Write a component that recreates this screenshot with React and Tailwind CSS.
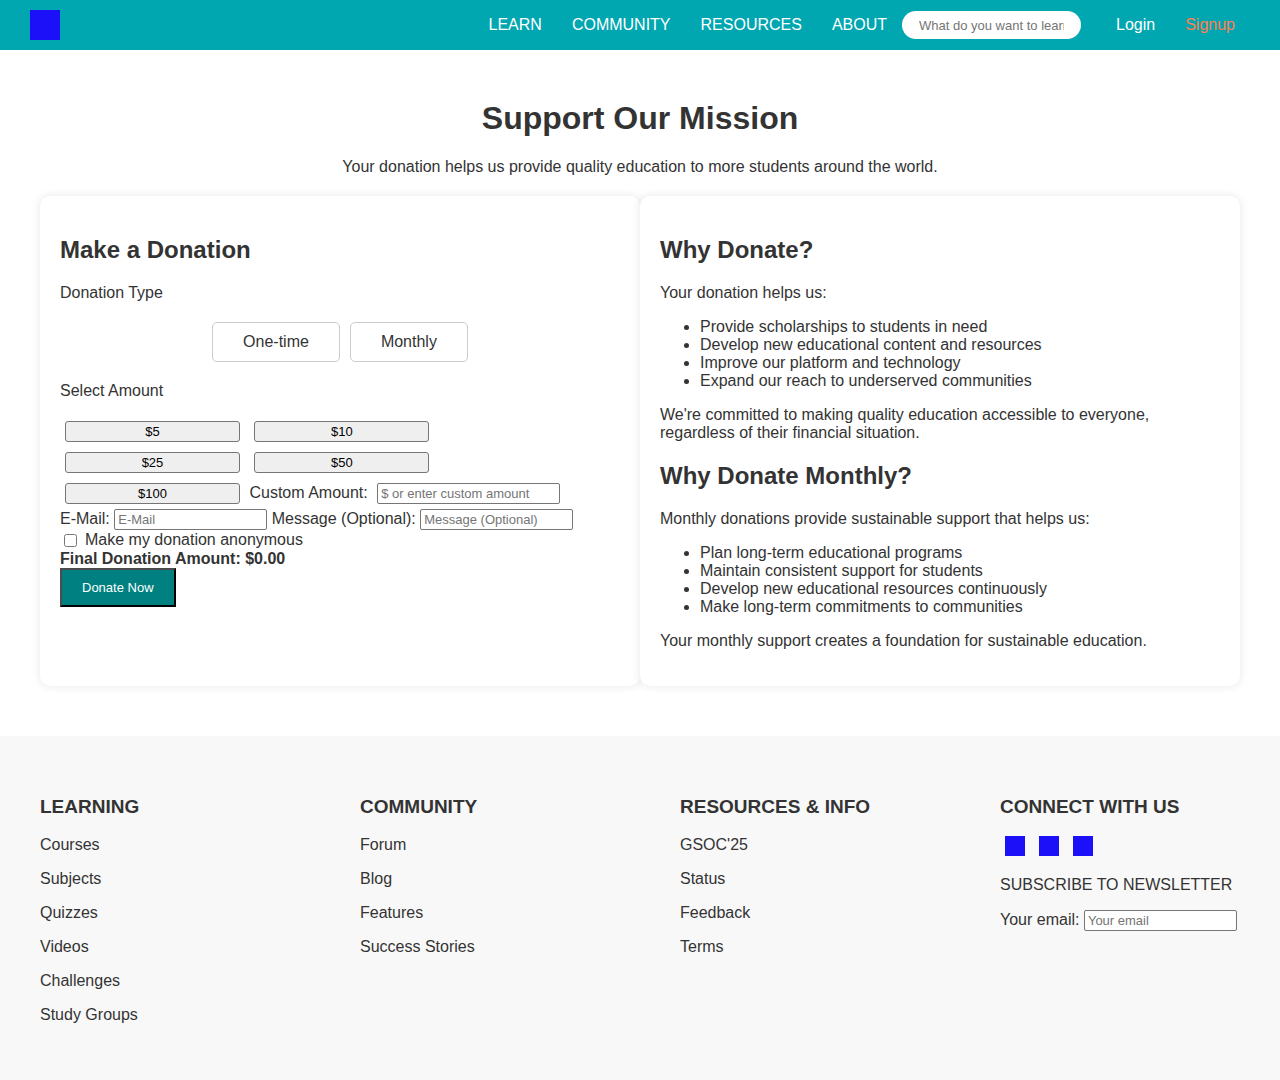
const navLinks = ["LEARN", "COMMUNITY", "RESOURCES", "ABOUT"];
const amounts = ["$5", "$10", "$25", "$50", "$100"];

const footerColumns = [
  {
    title: "LEARNING",
    links: ["Courses", "Subjects", "Quizzes", "Videos", "Challenges", "Study Groups"],
  },
  { title: "COMMUNITY", links: ["Forum", "Blog", "Features", "Success Stories"] },
  { title: "RESOURCES & INFO", links: ["GSOC'25", "Status", "Feedback", "Terms"] },
];

const fieldClass =
  "h-[21px] rounded-[2px] border border-[#767676] bg-white px-[3px] text-[13px] text-black placeholder:text-[#757575]";

function Header() {
  return (
    <header className="flex h-[50px] items-center justify-between bg-[#00a6b0] px-[30px] text-white">
      <a href="#home" aria-label="Home" className="block size-[30px] bg-[#1b10f8]" />
      <nav className="flex items-center">
        {navLinks.map((label) => (
          <a key={label} href={"#" + label.toLowerCase()} className="px-[15px]">
            {label}
          </a>
        ))}
        <input
          type="text"
          aria-label="Search"
          placeholder="What do you want to learn?"
          className="mr-5 h-7 w-[179px] rounded-full bg-white px-[17px] text-[13px] text-black placeholder:text-[#757575]"
        />
        <a href="#login" className="px-[15px]">Login</a>
        <a href="#signup" className="px-[15px] text-[#ff7f50]">Signup</a>
      </nav>
    </header>
  );
}

function DonationForm() {
  return (
    <form className="rounded-[10px] bg-white p-5 shadow-[0_0_10px_rgba(0,0,0,0.1)]">
      <h2 className="my-5 text-[24px] leading-7 font-bold">Make a Donation</h2>
      <p>Donation Type</p>
      <div className="my-5 flex justify-center gap-2.5">
        <button type="button" className="h-10 rounded-[5px] border border-[#ccc] px-[30px]">
          One-time
        </button>
        <button type="button" className="h-10 rounded-[5px] border border-[#ccc] px-[30px]">
          Monthly
        </button>
      </div>
      <p className="mb-4">Select Amount</p>
      <div>
        {amounts.map((amount) => (
          <span key={amount}>
            <button
              type="button"
              className="m-[5px] h-[21px] w-[175px] rounded-[3px] border border-[#767676] bg-[#efefef] text-[13px] leading-[19px] text-black"
            >
              {amount}
            </button>{" "}
          </span>
        ))}
        <label htmlFor="custom">Custom Amount:</label>{" "}
        <input
          id="custom"
          type="text"
          placeholder="$ or enter custom amount"
          className={fieldClass + " m-[5px] w-[183px]"}
        />
      </div>
      <div>
        <label htmlFor="email">E-Mail:</label>{" "}
        <input id="email" type="email" placeholder="E-Mail" className={fieldClass + " w-[153px]"} />{" "}
        <label htmlFor="message">Message (Optional):</label>{" "}
        <input
          id="message"
          type="text"
          placeholder="Message (Optional)"
          className={fieldClass + " w-[153px]"}
        />
      </div>
      <div className="flex h-5 items-center gap-2 pl-1">
        <input id="anonymous" type="checkbox" className="size-[13px]" />
        <label htmlFor="anonymous">Make my donation anonymous</label>
      </div>
      <p className="font-bold">Final Donation Amount: $0.00</p>
      <button
        type="submit"
        className="h-[39px] border-2 border-t-[#4c4c4c] border-r-black border-b-black border-l-[#4c4c4c] bg-[#008080] px-5 text-[13px] text-white"
      >
        Donate Now
      </button>
    </form>
  );
}

function Reasons() {
  return (
    <section className="rounded-[10px] bg-white p-5 shadow-[0_0_10px_rgba(0,0,0,0.1)]">
      <h2 className="my-5 text-[24px] leading-7 font-bold">Why Donate?</h2>
      <p>Your donation helps us:</p>
      <ul className="my-4 list-disc pl-10">
        <li>Provide scholarships to students in need</li>
        <li>Develop new educational content and resources</li>
        <li>Improve our platform and technology</li>
        <li>Expand our reach to underserved communities</li>
      </ul>
      <p>
        We're committed to making quality education accessible to everyone, regardless of their
        financial situation.
      </p>
      <h2 className="my-5 text-[24px] leading-7 font-bold">Why Donate Monthly?</h2>
      <p>Monthly donations provide sustainable support that helps us:</p>
      <ul className="my-4 list-disc pl-10">
        <li>Plan long-term educational programs</li>
        <li>Maintain consistent support for students</li>
        <li>Develop new educational resources continuously</li>
        <li>Make long-term commitments to communities</li>
      </ul>
      <p className="mb-4">Your monthly support creates a foundation for sustainable education.</p>
    </section>
  );
}

function Footer() {
  return (
    <footer className="grid grid-cols-4 gap-x-20 bg-[#f8f8f8] px-10 pt-[60px] pb-14">
      {footerColumns.map((column) => (
        <div key={column.title}>
          <h3 className="mb-[18px] text-[19px] leading-[22px] font-bold whitespace-nowrap">{column.title}</h3>
          <ul className="flex flex-col gap-4">
            {column.links.map((link) => (
              <li key={link}>
                <a href="#footer">{link}</a>
              </li>
            ))}
          </ul>
        </div>
      ))}
      <div>
        <h3 className="mb-[18px] text-[19px] leading-[22px] font-bold whitespace-nowrap">CONNECT WITH US</h3>
        <div className="mb-5 flex gap-3.5 pl-[5px]">
          <a href="#twitter" aria-label="Twitter" className="size-5 bg-[#1b10f8]" />
          <a href="#facebook" aria-label="Facebook" className="size-5 bg-[#1b10f8]" />
          <a href="#instagram" aria-label="Instagram" className="size-5 bg-[#1b10f8]" />
        </div>
        <p className="mb-4 whitespace-nowrap">SUBSCRIBE TO NEWSLETTER</p>
        <label htmlFor="newsletter">Your email:</label>{" "}
        <input
          id="newsletter"
          type="email"
          placeholder="Your email"
          className={fieldClass + " w-[153px]"}
        />
      </div>
    </footer>
  );
}

export default function App() {
  return (
    <div className="bg-white font-['Liberation_Sans',Arial,sans-serif] text-[16px] leading-[18px] text-[#333]">
      <Header />
      <main className="px-10 pt-[50px] pb-[50px]">
        <h1 className="mb-[22px] text-center text-[32px] leading-9 font-bold">Support Our Mission</h1>
        <p className="mb-5 text-center">
          Your donation helps us provide quality education to more students around the world.
        </p>
        <div className="grid grid-cols-2">
          <DonationForm />
          <Reasons />
        </div>
      </main>
      <Footer />
    </div>
  );
}
